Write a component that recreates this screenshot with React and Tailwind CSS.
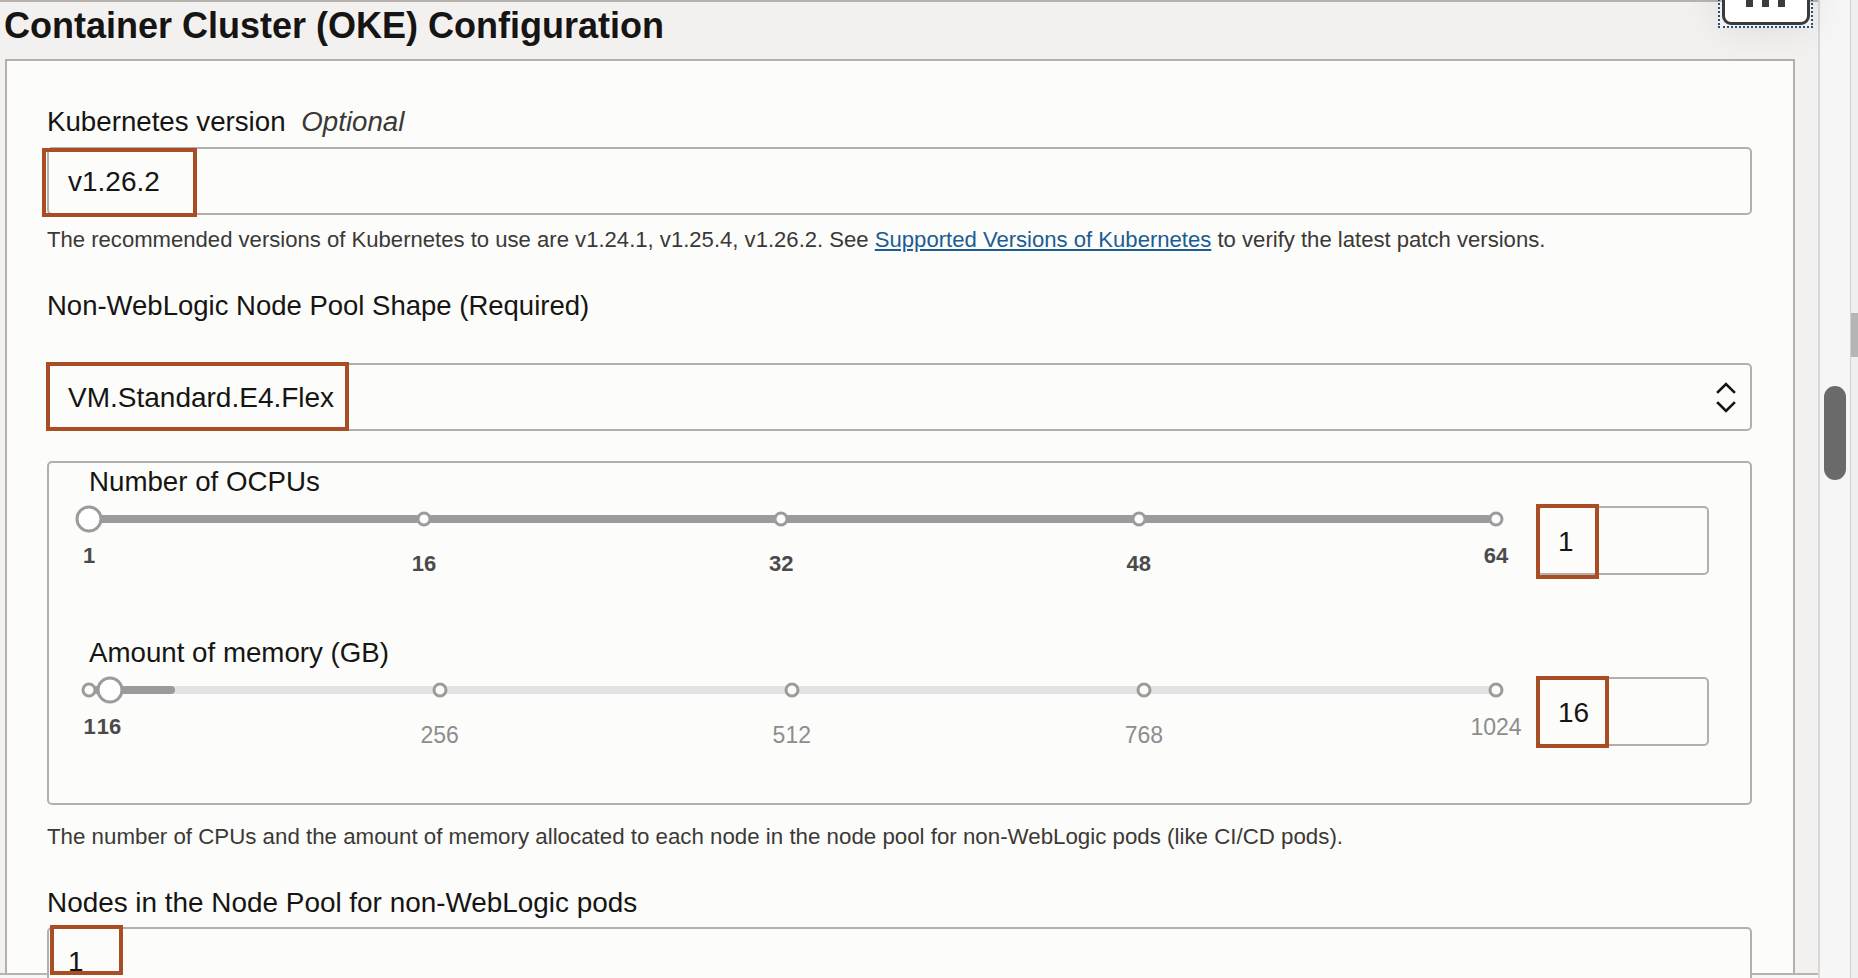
import React from "react";

const font = "font-['Liberation_Sans',Arial,sans-serif]";

function Highlight({ className }) {
  return <div className={`absolute border-4 border-[#a94d24] pointer-events-none ${className}`} />;
}

function TextInput({ value, children, highlight }) {
  return (
    <div className="relative h-[68px] rounded-[5px] border-2 border-[#b4afaa] bg-[#fcfcfb] flex items-center justify-between pl-[19px] pr-[14px]">
      <span className="text-[28px] leading-[32px] pt-[2px] text-[#161513]">{value}</span>
      {children}
      {highlight}
    </div>
  );
}

function Chevrons() {
  return (
    <svg width="20" height="34" viewBox="0 0 20 34" fill="none" stroke="#161513" strokeWidth="2.6" strokeLinecap="square">
      <path d="M2 12 L10 4 L18 12" />
      <path d="M2 23 L10 31 L18 23" />
    </svg>
  );
}

function Slider({ label, min, max, ticks, thumb, fill, dark, labels, inputValue, box }) {
  const pos = (v) => ((v - min) / (max - min)) * 100;
  return (
    <div>
      <div className="pl-[40px] text-[27.7px] leading-[32px] text-[#161513]">{label}</div>
      <div className="flex h-[80px]">
        <div className="relative ml-[40px] w-[1407px] h-[80px]">
          <div className={`absolute left-0 right-0 top-[17px] h-[8px] rounded-full ${dark ? "bg-[#9b9b9b]" : "bg-[#e3e3e3]"}`} />
          {fill > 0 && (
            <div className="absolute left-0 top-[17px] h-[8px] rounded-full bg-[#9b9b9b]" style={{ width: fill }} />
          )}
          {ticks.map((t) => (
            <div
              key={t}
              className="absolute top-[21px] w-[15px] h-[15px] -translate-x-1/2 -translate-y-1/2 rounded-full border-[3px] border-[#9b9b9b] bg-[#fcfcfb]"
              style={{ left: `${pos(t)}%` }}
            />
          ))}
          <div
            className="absolute top-[21px] w-[27px] h-[27px] -translate-x-1/2 -translate-y-1/2 rounded-full border-[3px] border-[#9b9b9b] bg-white"
            style={{ left: `${pos(thumb)}%` }}
          />
          {labels.map((l) => (
            <div
              key={l.text}
              className={`absolute -translate-x-1/2 leading-none whitespace-nowrap ${l.end ? "top-[47px]" : "top-[55px]"} ${
                l.bold ? "font-bold text-[22px] text-[#4a4a4a]" : "text-[23px] text-[#8d8d8d]"
              }`}
              style={{ left: `${pos(l.v)}%` }}
            >
              {l.text}
            </div>
          ))}
        </div>
        <div className="relative ml-[41px] mt-[8px] w-[172px] h-[69px] rounded-[5px] border-2 border-[#b4afaa] bg-[#fcfcfb] flex items-center pl-[19px]">
          <span className="text-[28px] leading-[32px] pt-[2px] text-[#161513]">{inputValue}</span>
          {box}
        </div>
      </div>
    </div>
  );
}

export default function App() {
  return (
    <div className={`relative w-[1858px] h-[978px] overflow-hidden flex bg-[#f3f1ef] ${font}`}>
      <div className="w-[1818px] flex flex-col">
        <div className="h-[2px] bg-[#b8b3ae]" />
        <div className="h-[57px] pt-[4px] pl-[4px]">
          <h1 className="text-[36px] leading-[40px] font-bold text-[#161513]">Container Cluster (OKE) Configuration</h1>
        </div>
        <div className="h-[914px] flex">
          <div className="w-[5px]" />
          <div className="w-[1790px] h-[940px] border-l-2 border-t-2 border-r-2 border-[#b4afaa] bg-[#fcfcfb] pl-[40px] pr-[41px] pt-[45px]">
            <div className="text-[27.7px] leading-[32px] text-[#161513]">
              Kubernetes version <span className="italic ml-[8px] text-[#3a3936]">Optional</span>
            </div>
            <div className="mt-[9px]">
              <TextInput value="v1.26.2" highlight={<Highlight className="left-[-7px] top-[-1px] w-[155px] h-[69px]" />} />
            </div>
            <p className="mt-[11px] text-[22.1px] leading-[28px] text-[#3a3936]">
              The recommended versions of Kubernetes to use are v1.24.1, v1.25.4, v1.26.2. See{" "}
              <span className="text-[#1b5c92] underline underline-offset-2">Supported Versions of Kubernetes</span> to verify the latest
              patch versions.
            </p>
            <div className="mt-[36px] text-[27.5px] leading-[32px] text-[#161513]">Non-WebLogic Node Pool Shape (Required)</div>
            <div className="mt-[41px]">
              <TextInput value="VM.Standard.E4.Flex" highlight={<Highlight className="left-[-3px] top-[-3px] w-[303px] h-[69px]" />}>
                <Chevrons />
              </TextInput>
            </div>
            <div className="mt-[30px] rounded-[5px] border-2 border-[#b4afaa] pt-[3px] pb-[54px]">
              <Slider
                label="Number of OCPUs"
                min={1}
                max={64}
                ticks={[16, 32, 48, 64]}
                thumb={1}
                fill={0}
                dark
                labels={[
                  { v: 1, text: "1", end: true, bold: true },
                  { v: 16, text: "16", bold: true },
                  { v: 32, text: "32", bold: true },
                  { v: 48, text: "48", bold: true },
                  { v: 64, text: "64", end: true, bold: true },
                ]}
                inputValue="1"
                box={<Highlight className="left-[-3px] top-[-4px] w-[63px] h-[75px]" />}
              />
              <div className="mt-[59px]">
                <Slider
                  label="Amount of memory (GB)"
                  min={1}
                  max={1024}
                  ticks={[1, 256, 512, 768, 1024]}
                  thumb={16}
                  fill={86}
                  labels={[
                    { v: 1.5, text: "1", end: true, bold: true },
                    { v: 15.5, text: "16", end: true, bold: true },
                    { v: 256, text: "256" },
                    { v: 512, text: "512" },
                    { v: 768, text: "768" },
                    { v: 1024, text: "1024", end: true },
                  ]}
                  inputValue="16"
                  box={<Highlight className="left-[-3px] top-[-3px] w-[73px] h-[72px]" />}
                />
              </div>
            </div>
            <p className="mt-[18px] text-[22.3px] leading-[28px] text-[#3a3936]">
              The number of CPUs and the amount of memory allocated to each node in the node pool for non-WebLogic pods (like CI/CD pods).
            </p>
            <div className="mt-[36px] text-[27.9px] leading-[32px] text-[#161513]">Nodes in the Node Pool for non-WebLogic pods</div>
            <div className="mt-[8px]">
              <TextInput value="1" highlight={<Highlight className="left-[1px] top-[-4px] w-[73px] h-[50px]" />} />
            </div>
          </div>
          <div className="flex-1" />
        </div>
        <div className="h-[2px] bg-[#b8b3ae]" />
        <div className="flex-1 bg-[#f7f7f7]" />
      </div>

      <div className="w-[40px] flex">
        <div className="w-[32px] border-l-2 border-[#d8d8d8] bg-[#f6f6f6] pl-[4px] pt-[386px]">
          <div className="w-[22px] h-[94px] rounded-full bg-[#6a6a6a]" />
        </div>
        <div className="flex-1 border-l border-[#d0d0d0] bg-[#efefef] pt-[313px]">
          <div className="h-[44px] bg-[#b5b5b5]" />
        </div>
      </div>

      <div className="absolute left-[1718px] top-[-40px] w-[95px] h-[68px] border-2 border-dotted border-[#1f5180] shadow-[0_0_40px_rgba(0,0,0,0.09)]">
        <div className="absolute left-[2px] right-[1px] top-0 bottom-[1px] rounded-[9px] border-[3px] border-[#3b3b3b] bg-white">
          <div className="absolute left-[21px] bottom-[15px] flex gap-[9px]">
            <div className="w-[7px] h-[7px] bg-[#3b3b3b]" />
            <div className="w-[7px] h-[7px] bg-[#3b3b3b]" />
            <div className="w-[7px] h-[7px] bg-[#3b3b3b]" />
          </div>
        </div>
      </div>
    </div>
  );
}
